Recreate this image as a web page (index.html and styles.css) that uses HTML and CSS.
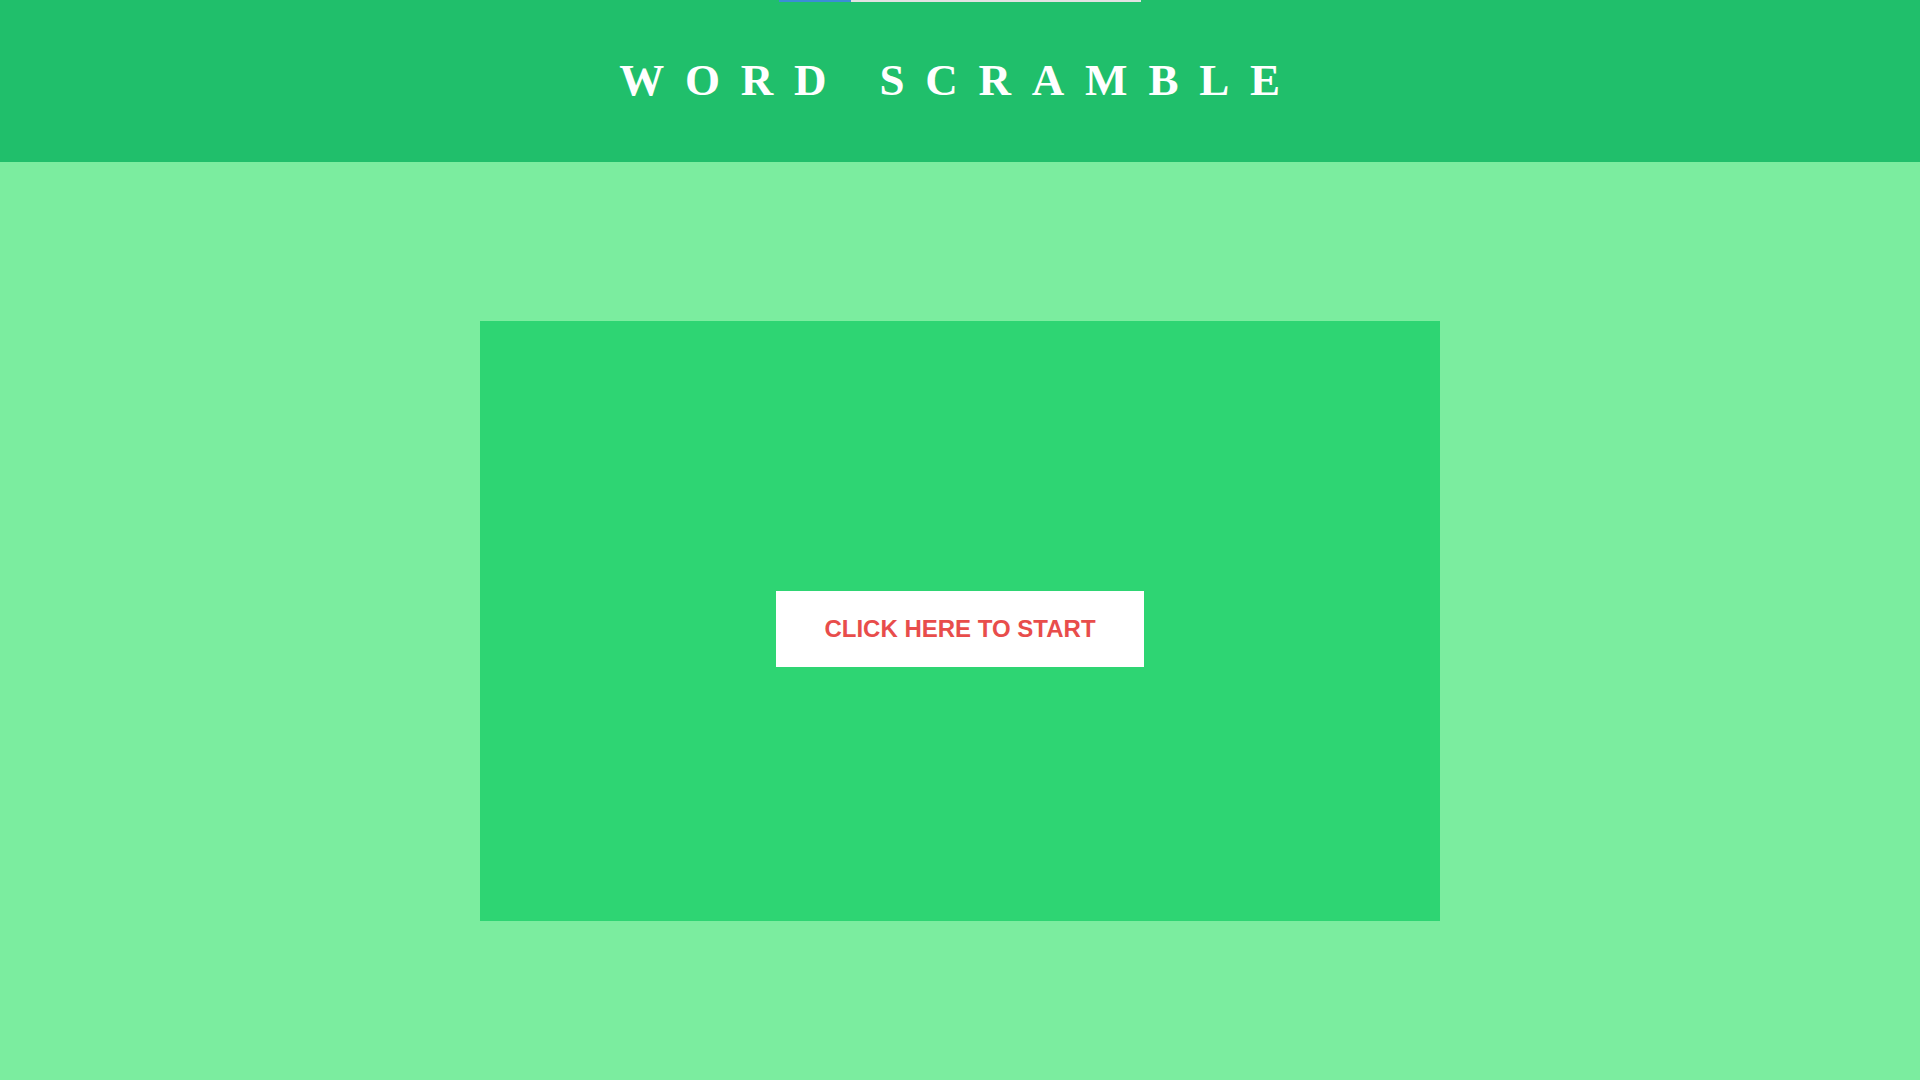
FILE: index.html
```html
<!DOCTYPE html>
<html lang="en">
<head>
<meta charset="utf-8">
<title>Word Scramble</title>
<link rel="stylesheet" href="styles.css">
</head>
<body>
<header class="header">
  <div class="progress"><div class="progress-fill" style="width: 20%"></div></div>
  <h1 class="title">WORD SCRAMBLE</h1>
</header>
<main class="main">
  <section class="card">
    <button class="start-btn" type="button">CLICK HERE TO START</button>
  </section>
</main>
</body>
</html>
```

FILE: styles.css
```css
* { box-sizing: border-box; }
html, body {
  margin: 0;
  padding: 0;
  height: 100%;
}
body {
  background: #7bed9f;
  font-family: "Liberation Sans", Arial, sans-serif;
}
.header {
  position: relative;
  height: 162px;
  background: #20bf6b;
  padding-top: 58px;
}
.progress {
  position: absolute;
  top: 0;
  left: 779px;
  width: 362px;
  height: 2px;
  background: #e2e2e2;
}
.progress-fill {
  height: 100%;
  background: #3a8ed6;
}
.title {
  margin: 0;
  text-align: center;
  font-family: "Liberation Serif", "Times New Roman", serif;
  font-weight: bold;
  font-size: 45px;
  line-height: 1;
  letter-spacing: 20.8px;
  color: #ffffff;
}
.main {
  display: flex;
  justify-content: center;
  padding-top: 159px;
}
.card {
  width: 960px;
  height: 600px;
  background: #2ed573;
  display: flex;
  justify-content: center;
  align-items: flex-start;
  padding-top: 270px;
}
.start-btn {
  width: 368px;
  height: 76px;
  border: none;
  background: #ffffff;
  color: #e84d4b;
  font-family: "Liberation Sans", Arial, sans-serif;
  font-weight: bold;
  font-size: 24px;
  line-height: 1;
  padding: 0;
  cursor: pointer;
}
```
